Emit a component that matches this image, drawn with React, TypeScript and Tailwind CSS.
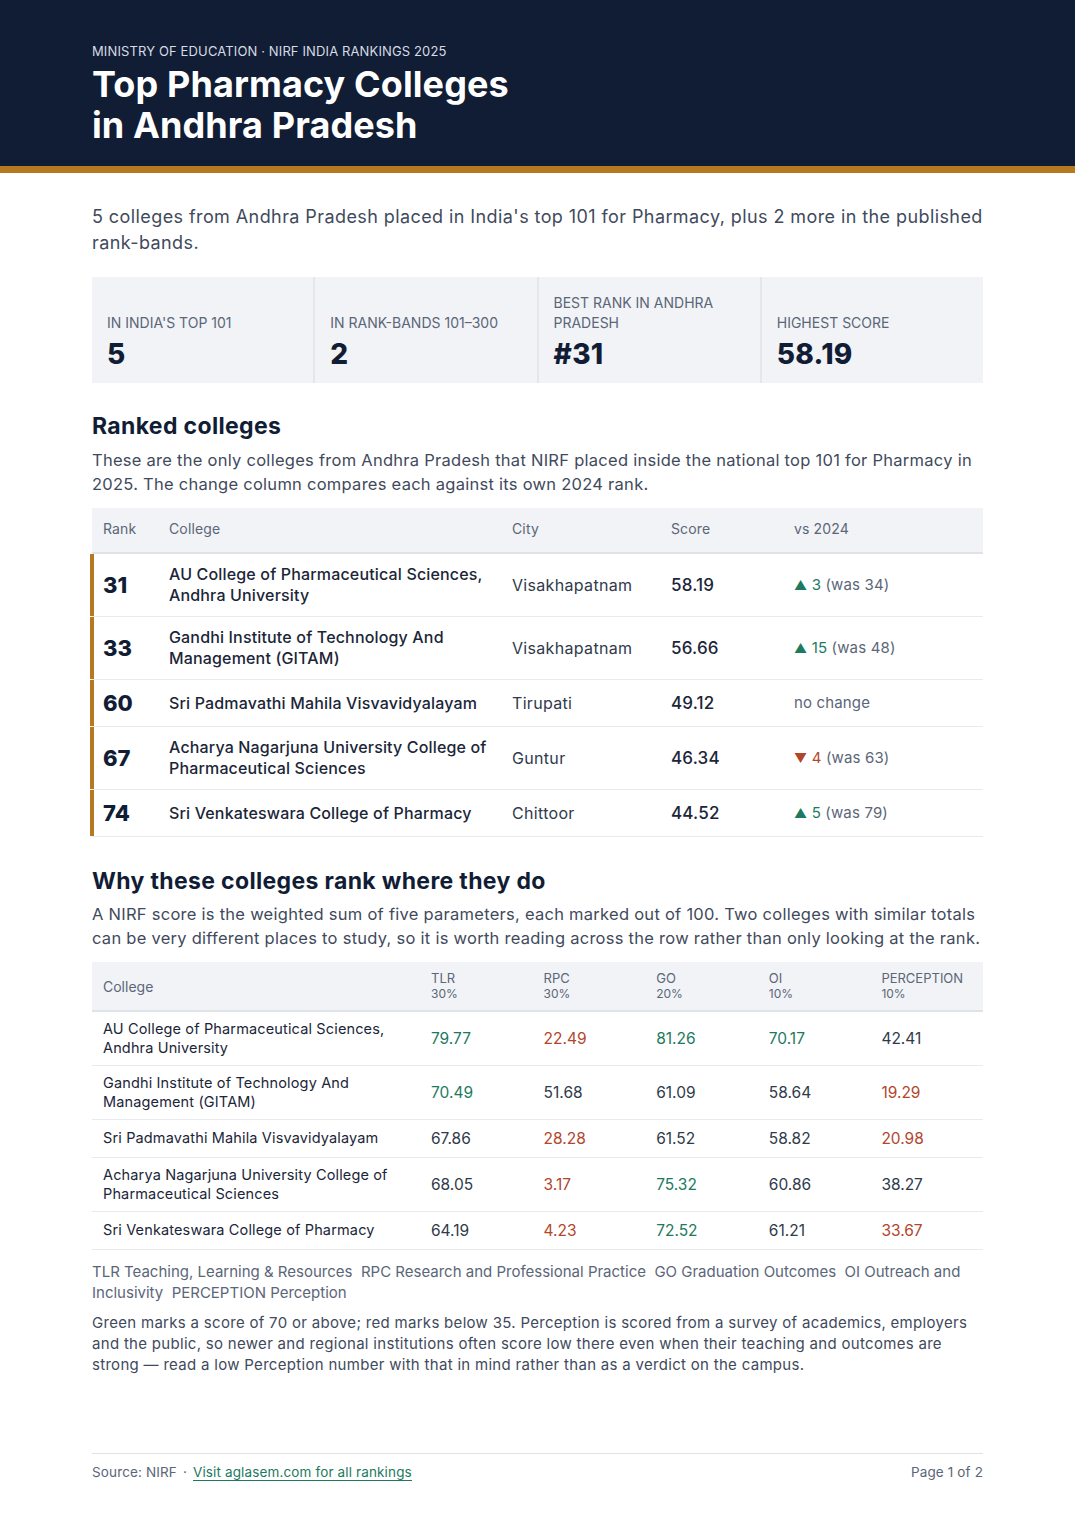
const ranked = [
  { rank: 31, college: 'AU College of Pharmaceutical Sciences, Andhra University', city: 'Visakhapatnam', score: '58.19', dir: 'up', delta: '3', was: '34' },
  { rank: 33, college: 'Gandhi Institute of Technology And Management (GITAM)', city: 'Visakhapatnam', score: '56.66', dir: 'up', delta: '15', was: '48' },
  { rank: 60, college: 'Sri Padmavathi Mahila Visvavidyalayam', city: 'Tirupati', score: '49.12', dir: 'same', delta: '', was: '' },
  { rank: 67, college: 'Acharya Nagarjuna University College of Pharmaceutical Sciences', city: 'Guntur', score: '46.34', dir: 'down', delta: '4', was: '63' },
  { rank: 74, college: 'Sri Venkateswara College of Pharmacy', city: 'Chittoor', score: '44.52', dir: 'up', delta: '5', was: '79' },
]

const params = [
  { college: 'AU College of Pharmaceutical Sciences, Andhra University', v: ['79.77', '22.49', '81.26', '70.17', '42.41'] },
  { college: 'Gandhi Institute of Technology And Management (GITAM)', v: ['70.49', '51.68', '61.09', '58.64', '19.29'] },
  { college: 'Sri Padmavathi Mahila Visvavidyalayam', v: ['67.86', '28.28', '61.52', '58.82', '20.98'] },
  { college: 'Acharya Nagarjuna University College of Pharmaceutical Sciences', v: ['68.05', '3.17', '75.32', '60.86', '38.27'] },
  { college: 'Sri Venkateswara College of Pharmacy', v: ['64.19', '4.23', '72.52', '61.21', '33.67'] },
]

const heads = [
  { k: 'TLR', w: '30%' },
  { k: 'RPC', w: '30%' },
  { k: 'GO', w: '20%' },
  { k: 'OI', w: '10%' },
  { k: 'PERCEPTION', w: '10%' },
]

// green for 70+, red under 35
const tone = (s: string) => {
  const n = parseFloat(s)
  if (n >= 70) return 'text-[#1d7a60]'
  if (n < 35) return 'text-[#b2462c]'
  return 'text-[#2f3a4b]'
}

const Stat = ({ label, value }: { label: string; value: string }) => (
  <div className="flex flex-col justify-end bg-[#f1f3f6] px-[15px] pb-[11px] pt-3">
    <p className="text-[14px] uppercase leading-[20px] text-[#5b6678]">{label}</p>
    <p className="mt-[3px] text-[28px] font-extrabold leading-[36px] tracking-[0.01em] text-[#111d35]">{value}</p>
  </div>
)

export default function App() {
  return (
    <div className="min-h-[1520px] bg-white font-['Inter',sans-serif] text-[#111d35]">
      <header className="border-b-[7px] border-[#b7791f] bg-[#111d35] px-[92px] pb-[20px] pt-[42px]">
        <p className="text-[13px] uppercase leading-[18px] tracking-[0.01em] text-[#d6dbe4]">
          Ministry of Education · NIRF India Rankings 2025
        </p>
        <h1 className="mt-[4px] text-[36px] font-bold leading-[41px] tracking-[0.003em] text-white">
          Top Pharmacy Colleges
          <br />
          in Andhra Pradesh
        </h1>
      </header>

      <main className="px-[92px]">
        <p className="mt-[31px] text-[18px] leading-[26px] tracking-[0.023em] text-[#3f4a5c]">
          5 colleges from Andhra Pradesh placed in India's top 101 for Pharmacy, plus 2 more in the published rank-bands.
        </p>

        <div className="mt-[21px] grid h-[106px] grid-cols-4 gap-[2px] bg-[#e3e6eb]">
          <Stat label="In India's top 101" value="5" />
          <Stat label="In rank-bands 101–300" value="2" />
          <Stat label="Best rank in Andhra Pradesh" value="#31" />
          <Stat label="Highest score" value="58.19" />
        </div>

        <h2 className="mt-[28px] text-[23px] font-bold leading-[30px] tracking-[0.015em]">Ranked colleges</h2>
        <p className="mt-[7px] text-[16.5px] leading-[24px] tracking-[0.016em] text-[#3f4a5c]">
          These are the only colleges from Andhra Pradesh that NIRF placed inside the national top 101 for Pharmacy in 2025. The change column compares each against its own 2024 rank.
        </p>

        <div className="mt-[12px]">
          <div className="grid h-[46px] grid-cols-[66px_343px_159px_123px_1fr] items-center border-b-2 border-[#dfe3e8] bg-[#f1f3f6] pb-[3px] text-[14px] tracking-[0.01em] text-[#5b6678]">
            <span className="pl-[11px]">Rank</span>
            <span className="pl-[11px]">College</span>
            <span className="pl-[11px]">City</span>
            <span className="pl-[11px]">Score</span>
            <span className="pl-[11px]">vs 2024</span>
          </div>
          {ranked.map((r) => (
            <div
              key={r.rank}
              className="grid min-h-[47px] grid-cols-[66px_343px_159px_123px_1fr] items-center border-b border-[#e8eaee] py-[10px]"
            >
              <span className="-my-[10px] -ml-[2px] flex items-center self-stretch border-l-4 border-[#b7791f] pl-[9px] text-[22px] font-extrabold leading-[24px]">
                {r.rank}
              </span>
              <span className="pl-[11px] text-[16px] font-medium leading-[21px] tracking-[0.01em] text-[#1b2638]">{r.college}</span>
              <span className="pl-[11px] text-[16px] leading-[24px] tracking-[0.02em] text-[#2f3a4b]">{r.city}</span>
              <span className="pl-[11px] text-[17px] font-medium leading-[24px] tracking-[0.01em] text-[#1b2638]">{r.score}</span>
              <span className="pl-[11px] text-[15px] leading-[24px] tracking-[0.01em] text-[#5b6678]">
                {r.dir === 'up' && (
                  <>
                    <span className="text-[#1d7a60]">
                      <span className="text-[13px]">▲</span> {r.delta}
                    </span>{' '}
                    (was {r.was})
                  </>
                )}
                {r.dir === 'down' && (
                  <>
                    <span className="text-[#b2462c]">
                      <span className="text-[13px]">▼</span> {r.delta}
                    </span>{' '}
                    (was {r.was})
                  </>
                )}
                {r.dir === 'same' && 'no change'}
              </span>
            </div>
          ))}
        </div>

        <h2 className="mt-[29px] text-[23px] font-bold leading-[30px] tracking-[0.015em]">Why these colleges rank where they do</h2>
        <p className="mt-[6px] text-[16.5px] leading-[24px] tracking-[0.016em] text-[#3f4a5c]">
          A NIRF score is the weighted sum of five parameters, each marked out of 100. Two colleges with similar totals can be very different places to study, so it is worth reading across the row rather than only looking at the rank.
        </p>

        <div className="mt-[12px]">
          <div className="grid h-[50px] grid-cols-[328px_1fr_1fr_1fr_1fr_1fr] items-center border-b-2 border-[#dfe3e8] bg-[#f1f3f6] text-[#5b6678]">
            <span className="pl-[11px] text-[14px]">College</span>
            {heads.map((h) => (
              <span key={h.k} className="pl-[11px] text-[13px] leading-[15px]">
                {h.k}
                <br />
                <span className="text-[12px]">{h.w}</span>
              </span>
            ))}
          </div>
          {params.map((p) => (
            <div
              key={p.college}
              className="grid min-h-[38px] grid-cols-[328px_1fr_1fr_1fr_1fr_1fr] items-center border-b border-[#e8eaee] py-[8px]"
            >
              <span className="pl-[11px] pr-4 text-[14.5px] leading-[18.5px] tracking-[0.01em] text-[#1b2638]">{p.college}</span>
              {p.v.map((v, i) => (
                <span key={i} className={`pl-[11px] text-[15.5px] leading-[21px] ${tone(v)}`}>
                  {v}
                </span>
              ))}
            </div>
          ))}
        </div>

        <p className="mt-[11px] text-[15px] leading-[21px] text-[#5b6678]">
          TLR Teaching, Learning &amp; Resources&nbsp; RPC Research and Professional Practice&nbsp; GO Graduation Outcomes&nbsp; OI Outreach and Inclusivity&nbsp; PERCEPTION Perception
        </p>
        <p className="mt-[9px] text-[15px] leading-[21px] tracking-[0.02em] text-[#3f4a5c]">
          Green marks a score of 70 or above; red marks below 35. Perception is scored from a survey of academics, employers and the public, so newer and regional institutions often score low there even when their teaching and outcomes are strong — read a low Perception number with that in mind rather than as a verdict on the campus.
        </p>

        <footer className="mt-[78px] flex items-center justify-between border-t border-[#dfe3e8] pt-[8px] text-[13.5px] tracking-[0.01em] text-[#5b6678]">
          <p>
            Source: NIRF<span className="mx-[6px]">·</span>
            <a href="#" className="border-b border-[#1d7a60] text-[#1d7a60]">
              Visit aglasem.com for all rankings
            </a>
          </p>
          <p>Page 1 of 2</p>
        </footer>
      </main>
    </div>
  )
}
